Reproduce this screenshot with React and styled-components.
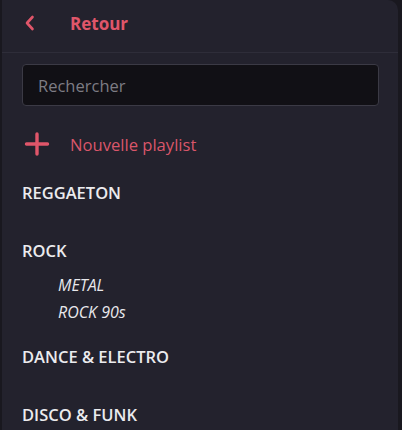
import styled, { createGlobalStyle } from 'styled-components'

const GlobalStyle = createGlobalStyle`
  body {
    margin: 0;
    background: #19181f;
    font-family: "Open Sans", "Liberation Sans", sans-serif;
  }
`

const categories = [
  { id: 1, name: 'REGGAETON', children: [] },
  { id: 2, name: 'ROCK', children: ['METAL', 'ROCK 90s'] },
  { id: 3, name: 'DANCE & ELECTRO', children: [] },
  { id: 4, name: 'DISCO & FUNK', children: [] },
]

const Panel = styled.div`
  margin: 0 4px 0 2px;
  min-height: 430px;
  background: #23222d;
  border-top-right-radius: 10px;
  overflow: hidden;
`

const Header = styled.div`
  height: 46px;
  padding-bottom: 6px;
  display: flex;
  align-items: center;
  padding-left: 22px;
  border-bottom: 1px solid #2e2d39;
`

const BackButton = styled.button`
  width: 46px;
  height: 30px;
  padding: 0;
  border: none;
  background: none;
  display: flex;
  align-items: center;
  color: #e0566a;
`

const Title = styled.span`
  font-size: 17px;
  font-weight: 700;
  color: #e0566a;
`

const SearchInput = styled.input`
  display: block;
  box-sizing: border-box;
  margin: 11px 19px 0 20px;
  width: calc(100% - 39px);
  height: 42px;
  padding: 0 15px;
  background: #111015;
  border: 1px solid #3b3a45;
  border-radius: 4px;
  font-family: inherit;
  font-size: 16.5px;
  color: #ddd;
  outline: none;

  &::placeholder {
    color: #7d7c84;
  }
`

const NewPlaylist = styled.div`
  margin-top: 18px;
  height: 40px;
  display: flex;
  align-items: center;
  padding-left: 21px;
  gap: 20px;
  color: #d9566a;
  font-size: 16.6px;
`

const CategoryName = styled.div`
  padding: 18px 20px ${props => (props.expanded ? '0' : '18px')};
  line-height: 22px;
  font-size: 16.5px;
  font-weight: 600;
  color: #ebebee;
`

const SubList = styled.ul`
  list-style: none;
  margin: 0;
  padding: 10px 0 2px 56px;
`

const SubItem = styled.li`
  line-height: 27px;
  font-size: 16px;
  font-style: italic;
  color: #e8e8ec;
`

const Chevron = () => (
  <svg width="12" height="16" viewBox="0 0 12 16" fill="none">
    <path d="M8.5 2 L3 8 L8.5 14" stroke="currentColor" strokeWidth="2.6" strokeLinecap="round" strokeLinejoin="round" />
  </svg>
)

const Plus = () => (
  <svg width="27" height="26" viewBox="0 0 27 26" fill="none">
    <path d="M14 3 V23 M3.5 13 H24.5" stroke="#e0566a" strokeWidth="3.4" strokeLinecap="round" />
  </svg>
)

const App = () => (
  <>
    <GlobalStyle />
    <Panel>
      <Header>
        <BackButton>
          <Chevron />
        </BackButton>
        <Title>Retour</Title>
      </Header>
      <SearchInput placeholder="Rechercher" />
      <NewPlaylist>
        <Plus />
        Nouvelle playlist
      </NewPlaylist>
      {categories.map(cat => (
        <div key={cat.id}>
          <CategoryName expanded={cat.children.length > 0}>{cat.name}</CategoryName>
          {cat.children.length > 0 && (
            <SubList>
              {cat.children.map(child => (
                <SubItem key={child}>{child}</SubItem>
              ))}
            </SubList>
          )}
        </div>
      ))}
    </Panel>
  </>
)

export default App
